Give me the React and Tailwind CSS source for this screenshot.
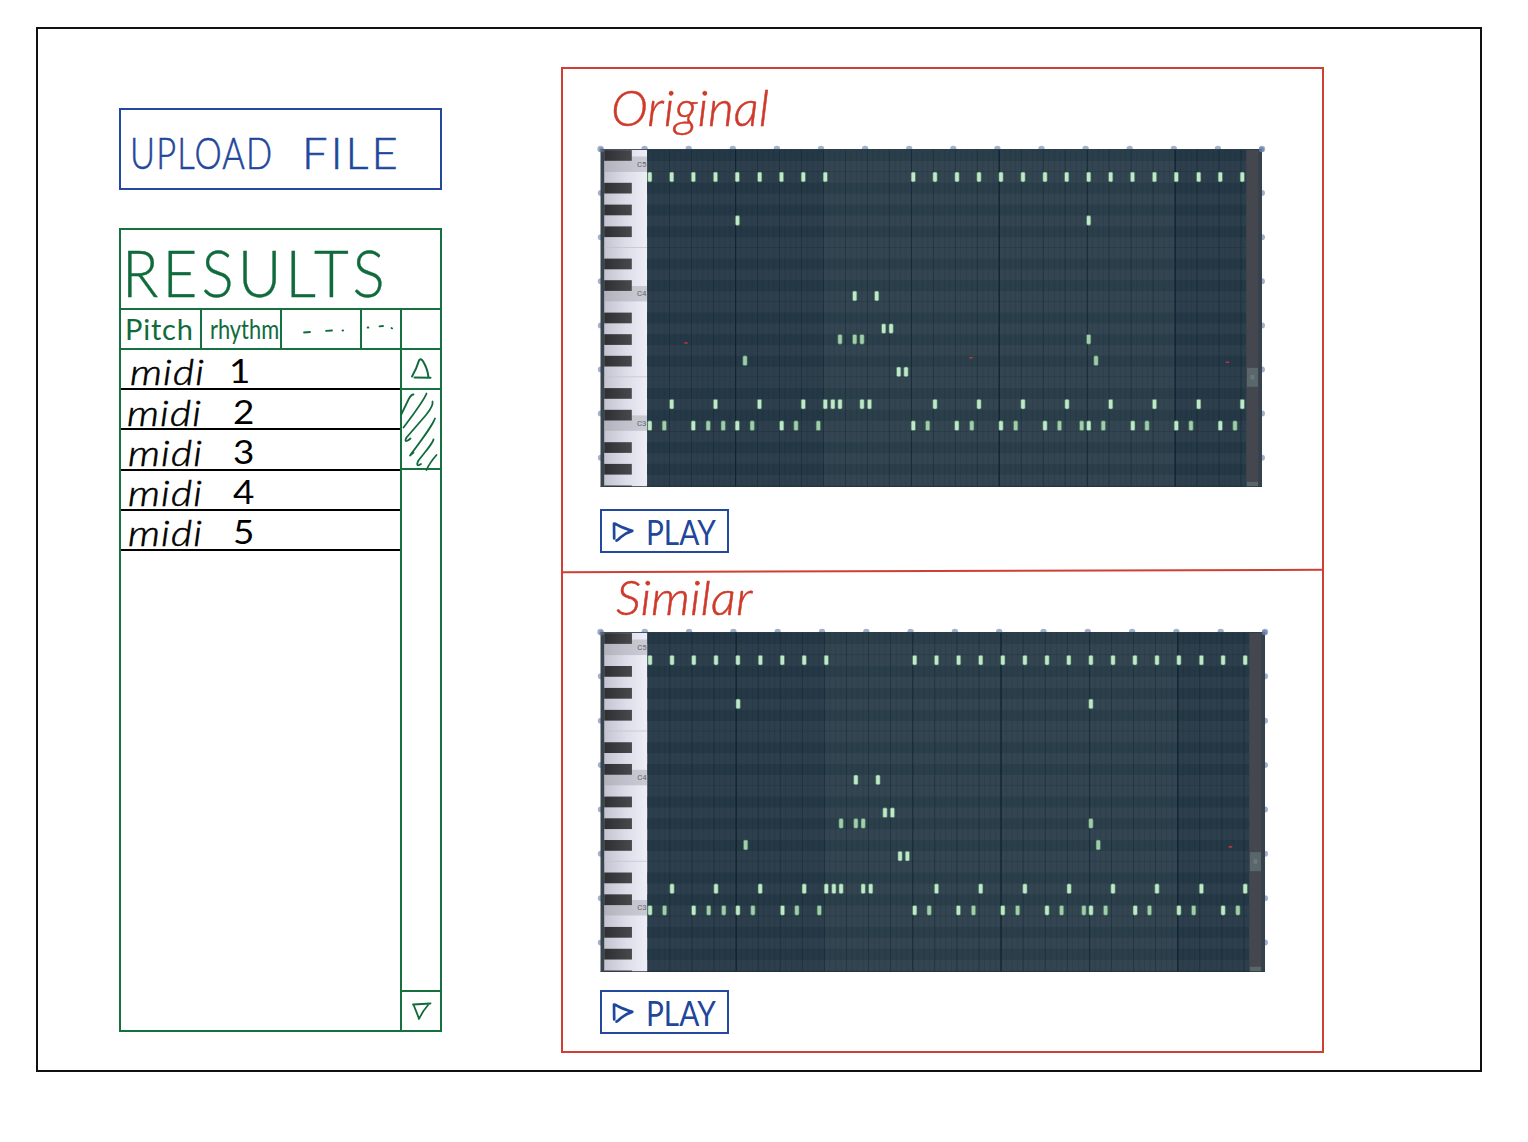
import React from "react";

const BLACK_KEYS = [150.3, 183, 204.8, 226.6, 258.8, 280.4, 312.8, 334.4, 356, 388.3, 410, 442.4, 464.1, 485.7];
const C_KEYS = [
  { label: "C5", y: 156.7 },
  { label: "C4", y: 286.2 },
  { label: "C3", y: 415.6 },
];
const KEY_GAPS = [247.3, 376.7];

const NOTES = [
  { y: 177, xs: [649.5, 671.7, 693.4, 715.5, 737.3, 759.7, 781.5, 803.3, 825.3, 913.3, 935, 957, 979, 1001, 1023, 1045, 1066.7, 1088.7, 1110.7, 1132.5, 1154.5, 1176.3, 1198.7, 1220.3, 1242.3] },
  { y: 220.5, xs: [737.5, 1088.7] },
  { y: 296, xs: [854.7, 876.7] },
  { y: 328.6, xs: [883.7, 891.1] },
  { y: 339.3, dim: true, xs: [840, 854.7, 862, 1088.7] },
  { y: 360.7, dim: true, xs: [745, 1096] },
  { y: 371.8, xs: [898.7, 906] },
  { y: 404.2, xs: [671.7, 715.5, 759.5, 803.3, 825.3, 832.8, 840, 862, 869.5, 935, 979, 1023, 1067, 1110.7, 1154.5, 1198.7, 1242.3] },
  { y: 425.7, xs: [649.5, 693.3, 737.3, 781.7, 913.3, 956.8, 1001, 1045, 1088.8, 1132.8, 1176.3, 1220.3] },
  { y: 425.7, dim: true, xs: [664.3, 708.2, 723.2, 752.2, 796, 818.3, 927.7, 971.8, 1015.7, 1059.5, 1081.7, 1103.3, 1147, 1191, 1235] },
];

const range = (n) => Array.from({ length: n }, (_, i) => i);

function PianoRoll({ className, marks, id }) {
  return (
    <svg className={className} viewBox="600 149.2 661.5 337.5" preserveAspectRatio="none" overflow="visible">
      <defs>
        <linearGradient id={`${id}-key`} x1="0" x2="1">
          <stop offset="0" stopColor="#c3c4cf" />
          <stop offset="0.5" stopColor="#dcdde8" />
          <stop offset="1" stopColor="#eeeef7" />
        </linearGradient>
        <linearGradient id={`${id}-black`} x1="0" x2="1">
          <stop offset="0" stopColor="#2d2f33" />
          <stop offset="1" stopColor="#48494d" />
        </linearGradient>
      </defs>
      <g fill="#a3b2cb">
        {range(16).map((i) => <circle key={i} cx={600.5 + i * 44.1} cy="149.2" r="3.2" />)}
        {range(7).map((i) => <circle key={i} cx="600.8" cy={193.3 + i * 44.1} r="3" />)}
        {range(7).map((i) => <circle key={i} cx="1262" cy={193.3 + i * 44.1} r="3" />)}
      </g>
      <rect x="600.5" y="149.5" width="661.5" height="337.5" fill="#3a444e" />
      <rect x="604.2" y="149.5" width="43.1" height="337.5" fill={`url(#${id}-key)`} />
      {C_KEYS.map((k) => (
        <g key={k.label}>
          <rect x="604.2" y={k.y} width="43.1" height="15.4" fill="#9b9ca5" fillOpacity="0.42" />
          <text x="637" y={k.y + 10.2} fontSize="7.8" fill="#65666e" fontFamily="Roboto, sans-serif">{k.label}</text>
        </g>
      ))}
      {KEY_GAPS.map((y) => <rect key={y} x="604.2" y={y} width="43.1" height="0.7" fill="#bfc1cc" />)}
      {BLACK_KEYS.map((y) => (
        <rect key={y} x="604.2" y={y} width="27.6" height={Math.min(10.7, 487 - y)} fill={`url(#${id}-black)`} />
      ))}

      <rect x="647.3" y="149.5" width="599.2" height="337.5" fill="#2d3f4c" />
      {BLACK_KEYS.map((y) => (
        <rect key={y} x="647.3" y={y} width="599.2" height={Math.min(10.9, 487 - y)} fill="#243845" />
      ))}
      <rect x="823.8" y="149.5" width="351" height="337.5" fill="#ffffff" fillOpacity="0.034" />
      <g fill="#10222e">
        {range(109).map((i) => <rect key={i} x={647.3 + i * 5.495} y="149.5" width="0.6" height="337.5" fillOpacity="0.2" />)}
        {range(27).map((i) => <rect key={i} x={669.1 + i * 21.98} y="149.5" width="0.8" height="337.5" fillOpacity="0.4" />)}
        {[911, 1087].map((x) => <rect key={x} x={x} y="149.5" width="1" height="337.5" fillOpacity="0.5" />)}
        {[735, 998.6, 1174.6].map((x) => <rect key={x} x={x} y="149.5" width="1.2" height="337.5" fillOpacity="0.9" />)}
        {[171.5, 247.3, 301.5, 376.7, 431.3].map((y) => <rect key={y} x="647.3" y={y} width="599.2" height="0.6" fillOpacity="0.3" />)}
      </g>
      {NOTES.map((row, r) =>
        row.xs.map((x) => (
          <rect key={`${r}-${x}`} x={Math.max(x - 2.2, 647.6)} y={row.y - 4.7} width="4.4" height="9.8" rx="1.4" fill={row.dim ? "#a0ceaa" : "#bfe9c9"} stroke="#416b55" strokeWidth="0.6" />
        ))
      )}
      {marks.map(([x, y]) => <rect key={x} x={x - 1.9} y={y - 0.8} width="3.8" height="1.6" rx="0.7" fill="#c0333a" />)}

      <rect x="1246.3" y="149.5" width="12.2" height="337.5" fill="#44474d" />
      <rect x="1258.5" y="149.5" width="3.5" height="337.5" fill="#35424d" />
      <rect x="1247" y="368" width="11" height="19" fill="#59666a" />
      <rect x="1250.7" y="375.2" width="3.6" height="4.4" fill="#6b787c" />
      <rect x="1247" y="482" width="11" height="5" fill="#59666a" />
      <rect x="600.5" y="149.3" width="661.5" height="0.8" fill="#24394a" />
      <rect x="600.5" y="486.3" width="661.5" height="0.7" fill="#26343e" />
      <circle cx="601.5" cy="150" r="2.6" fill="#6c7f9c" fillOpacity="0.55" />
      <circle cx="1261.5" cy="149.6" r="2.6" fill="#6c83ae" fillOpacity="0.8" />
    </svg>
  );
}

function PlayButton({ className }) {
  return (
    <button className={`flex h-[44px] w-[129px] items-center border-2 border-[#24489b] pl-[10px] text-[#1f479b] ${className}`}>
      <svg className="h-[22px] w-[22px] shrink-0" viewBox="0 0 22 22" fill="none" stroke="currentColor" strokeWidth="2.7" strokeLinecap="round" strokeLinejoin="round">
        <path d="M2 3.6L2.2 18.4M2 3.6C3.500 3.400 5 4.800 7 5.800C11 7.800 16 9.500 20.300 10.900C16 12.200 12 14.500 9 17C7.500 18.200 6 20 4.600 20.600" />
      </svg>
      <span className="ml-[12px] origin-left scale-x-[.85] font-['Lato',sans-serif] text-[35px] leading-[40px]">PLAY</span>
    </button>
  );
}

const FILES = [
  { n: 1, pad: "pl-[9px]", gap: "ml-[28px]", shift: "pt-[4px]" },
  { n: 2, pad: "pl-[6px]", gap: "ml-[35px]", shift: "pt-[5px]" },
  { n: 3, pad: "pl-[7px]", gap: "ml-[34px]", shift: "pt-[5px]" },
  { n: 4, pad: "pl-[7px]", gap: "ml-[34px]", shift: "pt-[4px]" },
  { n: 5, pad: "pl-[7px]", gap: "ml-[34px]", shift: "pt-[4px]" },
];

function Results() {
  return (
    <section className="mt-[38px] flex h-[804px] w-[323px] flex-col border-2 border-[#17703f] text-[#0f6b3b]">
      <h2 className="h-[80px] border-b-2 border-[#17703f] pl-[1px] font-['Lato',sans-serif] text-[66px] leading-[83px] font-light whitespace-nowrap [-webkit-text-stroke:0.4px_currentColor]">
        <span className="inline-block origin-left scale-x-[.91] tracking-[4.500px]">RESULTS</span>
      </h2>
      <div className="flex h-[40px] border-b-2 border-[#17703f] font-['Lato',sans-serif] leading-[38px]">
        <div className="w-[81px] border-r-2 border-[#17703f] pl-[4px] text-[29px] tracking-[0.8px]">Pitch</div>
        <div className="w-[80px] border-r-2 border-[#17703f] pl-[8px] text-[26px] whitespace-nowrap">
          <span className="inline-block origin-left scale-x-[.84]">rhythm</span>
        </div>
        <div className="flex w-[80px] items-center border-r-2 border-[#17703f] pt-[4px] pl-[21px]">
          <svg className="h-[8px] w-[48px]" viewBox="0 0 48 8" fill="none" stroke="currentColor" strokeWidth="1.8" strokeLinecap="round">
            <path d="M1 5.500L7 5M23 3.800L29 3.500M39.500 3.500h.6" />
          </svg>
        </div>
        <div className="flex w-[40px] items-center border-r-2 border-[#17703f] pl-[4px]">
          <svg className="h-[8px] w-[30px]" viewBox="0 0 30 8" fill="none" stroke="currentColor" strokeWidth="1.8" strokeLinecap="round">
            <path d="M1.600 2.500h.8M13.500 1.300L17 1M25.500 3l.6.4" />
          </svg>
        </div>
      </div>
      <div className="flex min-h-0 flex-1">
        <ul className="w-[279px] shrink-0 font-['Lato',sans-serif] text-black">
          {FILES.map((f) => (
            <li key={f.n} className={`flex h-[40.200px] items-center border-b-2 border-black leading-[32px] ${f.pad} ${f.shift}`}>
              <span className="w-[71px] origin-left scale-x-[1.17] text-[35px] font-light tracking-[1px] italic [-webkit-text-stroke:0.6px_currentColor]">midi</span>
              <span className={`origin-left scale-x-[1.15] text-[32px] ${f.gap}`}>{f.n}</span>
            </li>
          ))}
        </ul>
        <div className="flex w-[40px] flex-col border-l-2 border-[#17703f]">
          <div className="flex h-[40px] items-center justify-center border-b-2 border-[#17703f]">
            <svg className="h-[24px] w-[22px]" viewBox="0 0 22 24" fill="none" stroke="currentColor" strokeWidth="2" strokeLinecap="round" strokeLinejoin="round">
              <path d="M2 19.500C5 14.500 7.500 8.500 9 3.500C10 1.600 11.500 1.800 13 4.200C16 9 18 15 18.500 20.500M4.500 20.600L20.500 20.800" />
            </svg>
          </div>
          <div className="h-[80px] border-b-2 border-[#17703f]">
            <svg className="h-[80px] w-[38px]" viewBox="0 0 38 80" overflow="visible" fill="none" stroke="currentColor" strokeWidth="1.8" strokeLinecap="round" strokeLinejoin="round">
              <path d="M11.500 4.500C9 4.500 8 6.500 6.500 9.500L-.5 24M24.500 3.500C22.500 9 17 17 1.500 37.500M30.500 11.500C31.500 15 28 20 24 25L4.500 47.500C2.500 51 3.500 53 8.500 48.500M33 28.500C30 36 24 44 8 65.500L11.500 62.500M31.500 49.500C31 53 27 57 16.500 70.500C14 75 15.500 76.500 19 74M34.500 65C31 69 27 74 24.500 80" />
            </svg>
          </div>
          <div className="flex-1" />
          <div className="flex h-[40px] items-center justify-center border-t-2 border-[#17703f]">
            <svg className="h-[20px] w-[22px]" viewBox="0 0 22 20" fill="none" stroke="currentColor" strokeWidth="1.8" strokeLinecap="round" strokeLinejoin="round">
              <path d="M3.500 3.500C5.500 9 7.500 13 9 18C11.500 12 14.500 8 18.500 3.500M3 3.500L20.500 2.500" />
            </svg>
          </div>
        </div>
      </div>
    </section>
  );
}

export default function App() {
  return (
    <div className="h-[1142px] w-[1528px] overflow-hidden bg-white pt-[27px] pl-[36px]">
      <main className="flex h-[1045px] w-[1446px] border-2 border-[#111111]">
        <div className="ml-[81px] w-[323px] pt-[79px]">
          <button className="flex h-[82px] w-[323px] border-2 border-[#24489b] pl-[9px] text-left font-['Lato',sans-serif] text-[43px] leading-[86px] font-light whitespace-nowrap text-[#1f479b] [-webkit-text-stroke:0.6px_currentColor]">
            <span className="w-[172px] origin-left scale-x-[.8] tracking-[1.500px]">UPLOAD</span>
            <span className="origin-left scale-x-[1.050] tracking-[3px]">FILE</span>
          </button>
          <Results />
        </div>

        <div className="mt-[38px] ml-[119px] h-[986px] w-[763px] border-2 border-[#cf3f33]">
          <section className="h-[501px] pl-[37px]">
            <h2 className="h-[80px] pl-[11px] font-['Lato',sans-serif] text-[50px] leading-[77px] font-light text-[#cf3a2a] italic [-webkit-text-stroke:0.5px_currentColor]">
              Original
            </h2>
            <PianoRoll id="original" className="block h-[337.500px] w-[661.500px]" marks={[[686, 343.2], [971, 358], [1227.500, 362.500]]} />
            <PlayButton className="mt-[22.500px]" />
          </section>
          <div className="h-[2px] w-[760px] -rotate-[0.18deg] bg-[#cf3f33]" />
          <section className="pl-[37px]">
            <h2 className="h-[60px] pl-[16px] font-['Lato',sans-serif] text-[48px] leading-[50px] font-light text-[#cf3a2a] italic [-webkit-text-stroke:0.5px_currentColor]">
              <span className="inline-block origin-left scale-x-[1.040]">Similar</span>
            </h2>
            <PianoRoll id="similar" className="block h-[339.500px] w-[664.500px]" marks={[[1227.600, 362.800]]} />
            <PlayButton className="mt-[18.500px]" />
          </section>
        </div>
      </main>
    </div>
  );
}
